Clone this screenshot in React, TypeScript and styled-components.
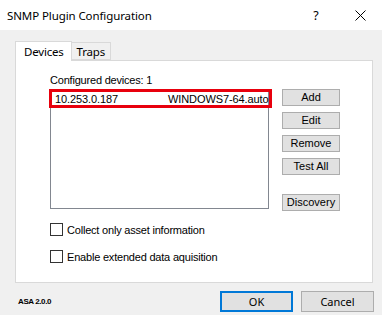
import styled, { createGlobalStyle } from "styled-components";

const GlobalStyle = createGlobalStyle`
  * { box-sizing: border-box; }
  body {
    margin: 0;
    font-family: "Noto Sans", "Open Sans", sans-serif;
    background: #f0f0f0;
  }
`;

const Window = styled.div`
  width: 382px;
  height: 315px;
  background: #f0f0f0;
  display: flex;
  flex-direction: column;
  overflow: hidden;
`;

const TitleBar = styled.div`
  height: 30px;
  background: #ffffff;
  display: flex;
  align-items: center;
  padding-left: 7px;
  font-size: 11.5px;
  letter-spacing: -0.1px;
  color: #000;
`;

const TitleText = styled.span`
  flex: 1;
`;

const TitleButton = styled.span`
  width: 44px;
  display: flex;
  justify-content: center;
  align-items: center;
  font-size: 12.5px;
`;

const Content = styled.div`
  padding: 10px 9px 0 15px;
`;

const TabStrip = styled.div`
  display: flex;
  align-items: flex-end;
  height: 20px;
`;

const Tab = styled.div<{ $active?: boolean }>`
  height: ${(p) => (p.$active ? "20px" : "18px")};
  padding: ${(p) => (p.$active ? "2px 7px 0 8px" : "1px 5px 0 5px")};
  background: ${(p) => (p.$active ? "#ffffff" : "#f0f0f0")};
  border: 1px solid #d9d9d9;
  border-bottom: ${(p) => (p.$active ? "none" : "1px solid #d9d9d9")};
  border-left: ${(p) => (p.$active ? "1px solid #d9d9d9" : "none")};
  font-size: 11.5px;
  letter-spacing: -0.2px;
  line-height: 15px;
  position: relative;
  z-index: ${(p) => (p.$active ? 1 : 0)};
  margin-bottom: ${(p) => (p.$active ? "-1px" : "0")};
`;

const TabPanel = styled.div`
  height: 223px;
  background: #ffffff;
  border: 1px solid #d9d9d9;
  padding: 12px 0 0 34px;
`;

const Label = styled.div`
  font-family: "Liberation Sans", Arial, sans-serif;
  font-size: 11px;
  letter-spacing: -0.2px;
  line-height: 14px;
  height: 16px;
  color: #000;
`;

const DevicesRow = styled.div`
  display: flex;
  gap: 13px;
`;

const ListBox = styled.div`
  width: 219px;
  height: 120px;
  border: 1px solid #828790;
  background: #fff;
  position: relative;
`;

const SelectedItem = styled.div`
  position: absolute;
  left: -2px;
  top: -1px;
  width: 223px;
  height: 19px;
  border: 3px solid #e8000d;
  display: flex;
  align-items: center;
  padding-left: 3px;
  font-family: "Liberation Sans", Arial, sans-serif;
  font-size: 11px;
  letter-spacing: -0.1px;
  white-space: nowrap;
  overflow: hidden;
`;

const Ip = styled.span`
  flex: none;
  width: 113px;
`;

const Host = styled.span`
  flex: none;
  white-space: nowrap;
`;

const ButtonColumn = styled.div`
  display: flex;
  flex-direction: column;
  gap: 6px;
`;

const SmallButton = styled.button<{ $gapBefore?: boolean }>`
  width: 58px;
  height: 17px;
  margin-top: ${(p) => (p.$gapBefore ? "13px" : "0")};
  background: #e1e1e1;
  border: 1px solid #adadad;
  font-family: "Liberation Sans", Arial, sans-serif;
  font-size: 11px;
  font-weight: normal;
  padding: 0;
  color: #000;
  line-height: 15px;
`;

const CheckList = styled.div`
  display: flex;
  flex-direction: column;
  gap: 14px;
  margin-top: 12px;
`;

const CheckRow = styled.label`
  display: flex;
  align-items: center;
  gap: 4px;
  font-family: "Liberation Sans", Arial, sans-serif;
  font-size: 11px;
  letter-spacing: -0.2px;
  height: 13px;
  color: #000;
`;

const Box = styled.span`
  width: 13px;
  height: 13px;
  border: 1px solid #333;
  background: #fff;
`;

const Footer = styled.div`
  display: flex;
  align-items: center;
  padding: 8px 8px 0 18px;
`;

const Version = styled.span`
  flex: 1;
  font-family: "Liberation Sans", Arial, sans-serif;
  font-size: 8px;
  font-weight: bold;
  letter-spacing: -0.4px;
  color: #000;
`;

const DialogButton = styled.button<{ $default?: boolean }>`
  width: 73px;
  height: 21px;
  margin-left: 8px;
  background: #e1e1e1;
  border: ${(p) => (p.$default ? "2px solid #0078d7" : "1px solid #adadad")};
  font-family: "Noto Sans", sans-serif;
  font-size: 11px;
  padding: 0;
  color: #000;
`;

const CloseIcon = () => (
  <svg width="11" height="11" viewBox="0 0 11 11">
    <path d="M0.5 0.5 L10.5 10.5 M10.5 0.5 L0.5 10.5" stroke="#000" strokeWidth="1" />
  </svg>
);

export default function App() {
  return (
    <>
      <GlobalStyle />
      <Window>
        <TitleBar>
          <TitleText>SNMP Plugin Configuration</TitleText>
          <TitleButton>?</TitleButton>
          <TitleButton>
            <CloseIcon />
          </TitleButton>
        </TitleBar>
        <Content>
          <TabStrip>
            <Tab $active>Devices</Tab>
            <Tab>Traps</Tab>
          </TabStrip>
          <TabPanel>
            <Label>Configured devices: 1</Label>
            <DevicesRow>
              <ListBox>
                <SelectedItem>
                  <Ip>10.253.0.187</Ip>
                  <Host>WINDOWS7-64.auto</Host>
                </SelectedItem>
              </ListBox>
              <ButtonColumn>
                <SmallButton>Add</SmallButton>
                <SmallButton>Edit</SmallButton>
                <SmallButton>Remove</SmallButton>
                <SmallButton>Test All</SmallButton>
                <SmallButton $gapBefore>Discovery</SmallButton>
              </ButtonColumn>
            </DevicesRow>
            <CheckList>
              <CheckRow>
                <Box />
                Collect only asset information
              </CheckRow>
              <CheckRow>
                <Box />
                Enable extended data aquisition
              </CheckRow>
            </CheckList>
          </TabPanel>
        </Content>
        <Footer>
          <Version>ASA 2.0.0</Version>
          <DialogButton $default>OK</DialogButton>
          <DialogButton>Cancel</DialogButton>
        </Footer>
      </Window>
    </>
  );
}
